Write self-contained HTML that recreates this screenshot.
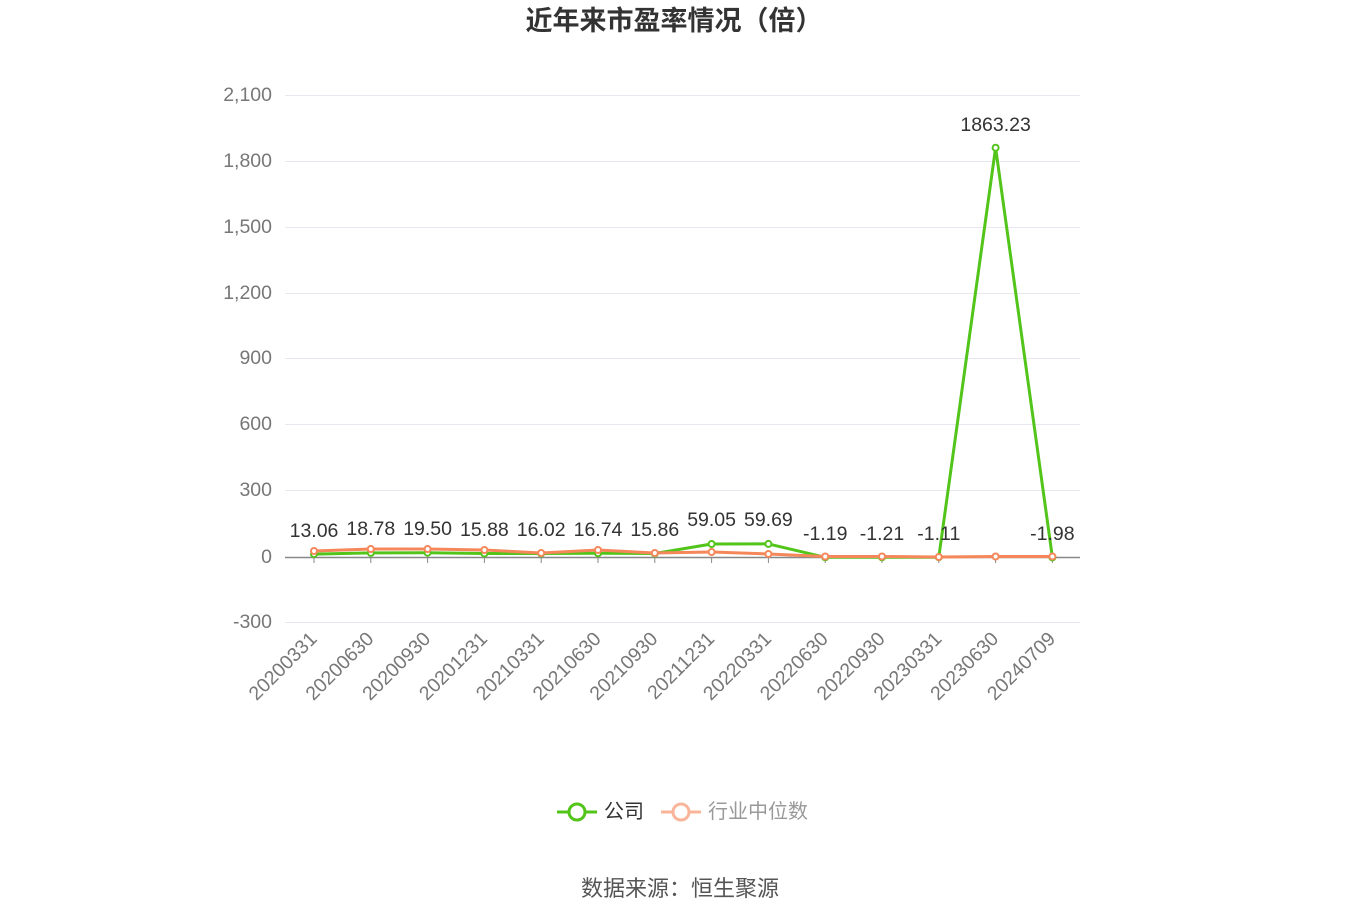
<!DOCTYPE html>
<html><head><meta charset="utf-8"><style>
body{margin:0;background:#fff;width:1360px;height:920px;overflow:hidden}
svg{display:block;font-family:"Liberation Sans","Noto Sans CJK SC",sans-serif}
</style></head><body>
<svg width="1360" height="920" viewBox="0 0 1360 920">
<text x="674" y="30" text-anchor="middle" font-size="27" font-weight="bold" fill="#333">近年来市盈率情况（倍）</text>
<g stroke="#e6e8f0" stroke-width="1">
<line x1="285" y1="95.5" x2="1080" y2="95.5"/><line x1="285" y1="161.5" x2="1080" y2="161.5"/>
<line x1="285" y1="227.5" x2="1080" y2="227.5"/><line x1="285" y1="293.5" x2="1080" y2="293.5"/>
<line x1="285" y1="358.5" x2="1080" y2="358.5"/><line x1="285" y1="424.5" x2="1080" y2="424.5"/>
<line x1="285" y1="490.5" x2="1080" y2="490.5"/><line x1="285" y1="622.5" x2="1080" y2="622.5"/>
</g>
<line x1="285" y1="557.5" x2="1080" y2="557.5" stroke="#888" stroke-width="1.5"/>
<g stroke="#888" stroke-width="1">
<line x1="314" y1="557" x2="314" y2="563"/><line x1="370.8" y1="557" x2="370.8" y2="563"/><line x1="427.6" y1="557" x2="427.6" y2="563"/><line x1="484.4" y1="557" x2="484.4" y2="563"/><line x1="541.2" y1="557" x2="541.2" y2="563"/><line x1="598" y1="557" x2="598" y2="563"/><line x1="654.8" y1="557" x2="654.8" y2="563"/><line x1="711.6" y1="557" x2="711.6" y2="563"/><line x1="768.4" y1="557" x2="768.4" y2="563"/><line x1="825.2" y1="557" x2="825.2" y2="563"/><line x1="882" y1="557" x2="882" y2="563"/><line x1="938.8" y1="557" x2="938.8" y2="563"/><line x1="995.6" y1="557" x2="995.6" y2="563"/><line x1="1052.4" y1="557" x2="1052.4" y2="563"/>
</g>
<g font-size="19.5" fill="#777" text-anchor="end">
<text x="272" y="101">2,100</text><text x="272" y="167">1,800</text><text x="272" y="233">1,500</text><text x="272" y="299">1,200</text><text x="272" y="364">900</text><text x="272" y="430">600</text><text x="272" y="496">300</text><text x="272" y="563">0</text><text x="272" y="628">-300</text>
</g>
<g font-size="19.5" fill="#777" text-anchor="end">
<text transform="translate(318,640) rotate(-45)">20200331</text>
<text transform="translate(374.8,640) rotate(-45)">20200630</text>
<text transform="translate(431.6,640) rotate(-45)">20200930</text>
<text transform="translate(488.4,640) rotate(-45)">20201231</text>
<text transform="translate(545.2,640) rotate(-45)">20210331</text>
<text transform="translate(602,640) rotate(-45)">20210630</text>
<text transform="translate(658.8,640) rotate(-45)">20210930</text>
<text transform="translate(715.6,640) rotate(-45)">20211231</text>
<text transform="translate(772.4,640) rotate(-45)">20220331</text>
<text transform="translate(829.2,640) rotate(-45)">20220630</text>
<text transform="translate(886,640) rotate(-45)">20220930</text>
<text transform="translate(942.8,640) rotate(-45)">20230331</text>
<text transform="translate(999.6,640) rotate(-45)">20230630</text>
<text transform="translate(1056.4,640) rotate(-45)">20240709</text>
</g>
<polyline fill="none" stroke="#52c41a" stroke-width="3" stroke-linejoin="round" points="314,554.1 370.8,552.9 427.6,552.7 484.4,553.5 541.2,553.5 598,553.3 654.8,553.5 711.6,544 768.4,543.9 825.2,557.3 882,557.3 938.8,557.2 995.6,147.7 1052.4,557.4"/>
<g fill="#fff" stroke="#52c41a" stroke-width="2">
<circle cx="314" cy="554.1" r="3"/><circle cx="370.8" cy="552.9" r="3"/><circle cx="427.6" cy="552.7" r="3"/><circle cx="484.4" cy="553.5" r="3"/><circle cx="541.2" cy="553.5" r="3"/><circle cx="598" cy="553.3" r="3"/><circle cx="654.8" cy="553.5" r="3"/><circle cx="711.6" cy="544" r="3"/><circle cx="768.4" cy="543.9" r="3"/><circle cx="825.2" cy="557.3" r="3"/><circle cx="882" cy="557.3" r="3"/><circle cx="938.8" cy="557.2" r="3"/><circle cx="995.6" cy="147.7" r="3"/><circle cx="1052.4" cy="557.4" r="3"/>
</g>
<polyline fill="none" stroke="#f5875a" stroke-width="3" stroke-linejoin="round" points="314,551 370.8,549 427.6,549 484.4,550 541.2,553 598,550 654.8,553 711.6,552 768.4,554 825.2,556.5 882,556.5 938.8,557 995.6,556.5 1052.4,556.5"/>
<g fill="#fff" stroke="#f5875a" stroke-width="2">
<circle cx="314" cy="551" r="3"/><circle cx="370.8" cy="549" r="3"/><circle cx="427.6" cy="549" r="3"/><circle cx="484.4" cy="550" r="3"/><circle cx="541.2" cy="553" r="3"/><circle cx="598" cy="550" r="3"/><circle cx="654.8" cy="553" r="3"/><circle cx="711.6" cy="552" r="3"/><circle cx="768.4" cy="554" r="3"/><circle cx="825.2" cy="556.5" r="3"/><circle cx="882" cy="556.5" r="3"/><circle cx="938.8" cy="557" r="3"/><circle cx="995.6" cy="556.5" r="3"/><circle cx="1052.4" cy="556.5" r="3"/>
</g>
<g font-size="19.5" fill="#333" text-anchor="middle">
<text x="314" y="537">13.06</text><text x="370.8" y="535">18.78</text><text x="427.6" y="535">19.50</text><text x="484.4" y="536">15.88</text><text x="541.2" y="536">16.02</text><text x="598" y="536">16.74</text><text x="654.8" y="536">15.86</text><text x="711.6" y="526">59.05</text><text x="768.4" y="526">59.69</text><text x="825.2" y="540">-1.19</text><text x="882" y="540">-1.21</text><text x="938.8" y="540">-1.11</text><text x="995.6" y="131">1863.23</text><text x="1052.4" y="540">-1.98</text>
</g>
<line x1="557" y1="812" x2="597" y2="812" stroke="#52c41a" stroke-width="3"/>
<circle cx="577" cy="812" r="8" fill="#fff" stroke="#52c41a" stroke-width="3"/>
<text x="604" y="818" font-size="20" fill="#333">公司</text>
<line x1="661" y1="812" x2="701" y2="812" stroke="#f9b59a" stroke-width="3"/>
<circle cx="681" cy="812" r="8" fill="#fff" stroke="#f9b59a" stroke-width="3"/>
<text x="708" y="818" font-size="20" fill="#999">行业中位数</text>
<text x="680" y="896" text-anchor="middle" font-size="22" fill="#555">数据来源：恒生聚源</text>
</svg>
</body></html>
